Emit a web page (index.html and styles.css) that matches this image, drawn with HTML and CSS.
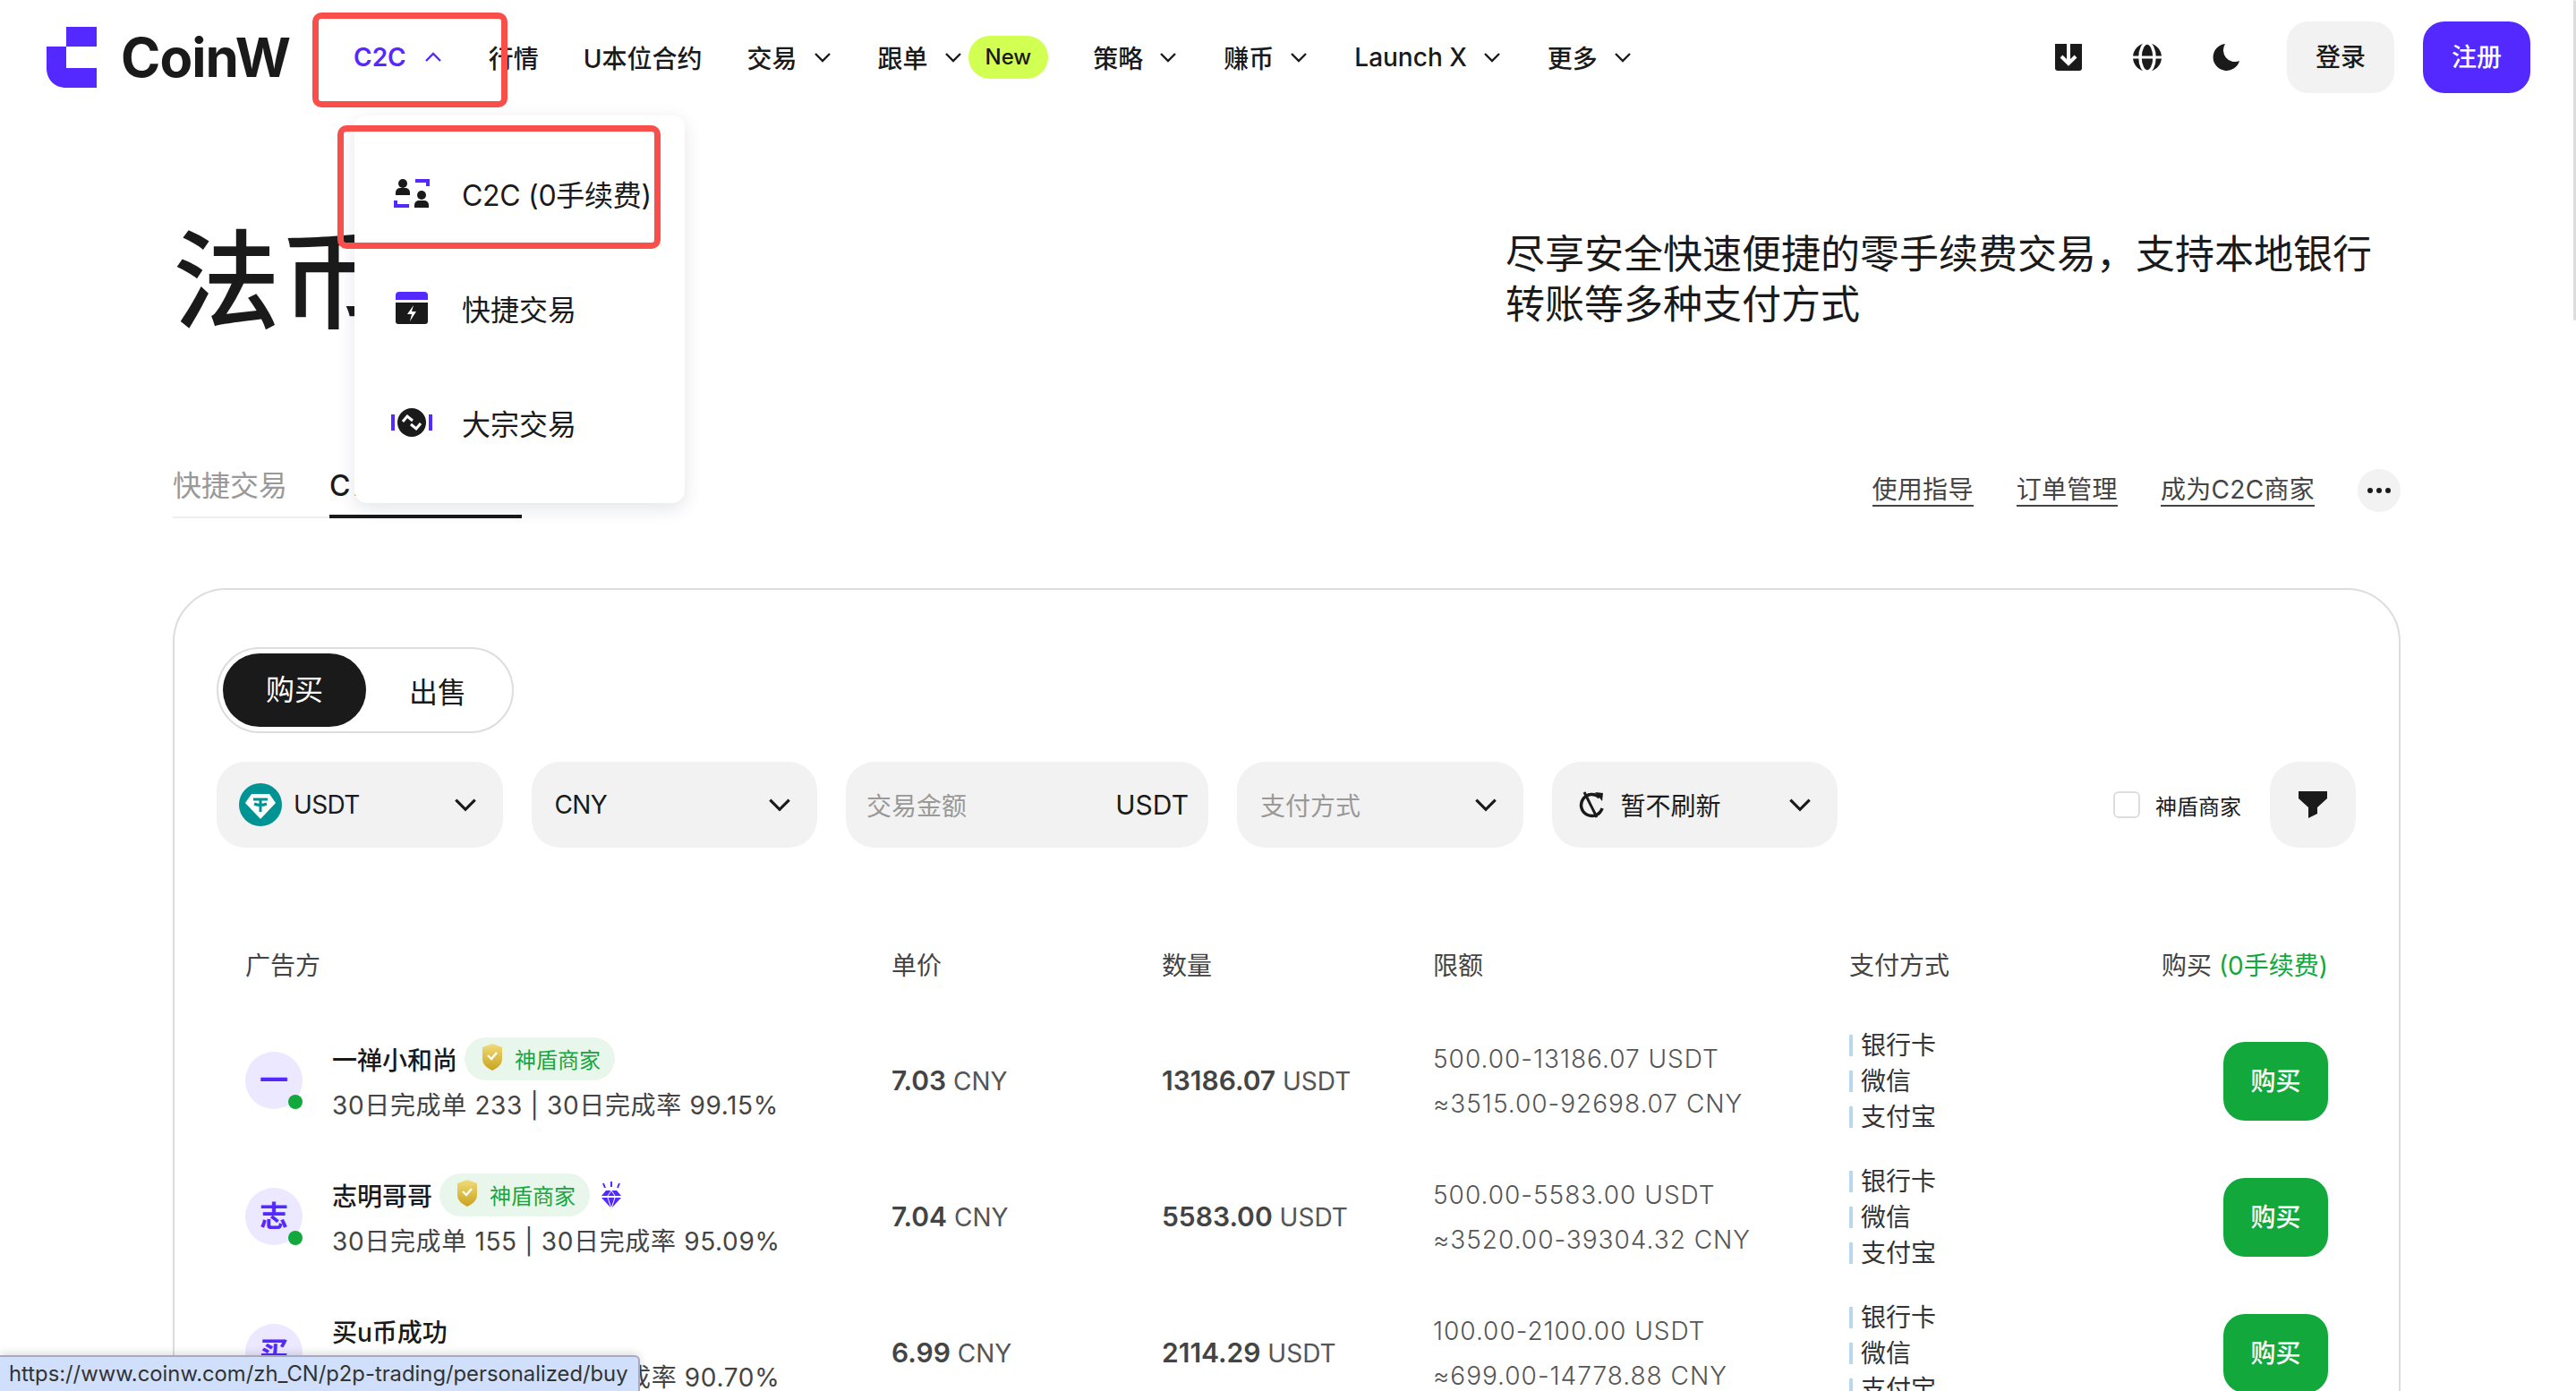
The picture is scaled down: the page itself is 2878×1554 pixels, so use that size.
FILE: index.html
```html
<!DOCTYPE html>
<html lang="zh-CN">
<head>
    <meta charset="UTF-8">
    <title>CoinW C2C</title>
    <link rel="stylesheet" href="styles.css">
</head>
<body>
    <svg class="sprite" aria-hidden="true">
        <defs>
            <linearGradient id="gold" x1="0" y1="0" x2="0" y2="1">
                <stop offset="0" stop-color="#f0dc7a"/>
                <stop offset="1" stop-color="#c9a21c"/>
            </linearGradient>
            <symbol id="chev" viewBox="0 0 24 24"><path d="M4 8l8 8 8-8" fill="none" stroke="currentColor" stroke-width="2.4"/></symbol>
            <symbol id="shield" viewBox="0 0 24 36"><path d="M12 1L23 5v13c0 6-5 10-11 13C6 28 1 24 1 18V5z" fill="url(#gold)"/><path d="M7 14l4 4 6-7" fill="none" stroke="#fff" stroke-width="2.4"/></symbol>
            <symbol id="gem" viewBox="0 0 24 30"><path d="M12 0v6M3 2l2 5M21 2l-2 5" stroke="#5429ff" stroke-width="2"/><path d="M6 10h12l5 6H1zM1 18h22L12 30z" fill="#5429ff"/><path d="M8 18l4 12 4-12M8 16l4-6 4 6" fill="none" stroke="#fff" stroke-width="1"/></symbol>
        </defs>
    </svg>

    <header class="nav">
        <a class="logo">
            <svg width="56" height="68" viewBox="0 0 56 68"><path d="M22 0h34v22H22zM0 22h22v24h34v22H22C9 68 0 59 0 46z" fill="#5429ff"/></svg>
            <span>CoinW</span>
        </a>
        <nav class="nav-links">
            <a class="nav-item active">C2C <svg class="chev flip"><use href="#chev"/></svg></a>
            <a class="nav-item">行情</a>
            <a class="nav-item">U本位合约</a>
            <a class="nav-item">交易 <svg class="chev"><use href="#chev"/></svg></a>
            <a class="nav-item">跟单 <svg class="chev"><use href="#chev"/></svg><span class="new-pill">New</span></a>
            <a class="nav-item">策略 <svg class="chev"><use href="#chev"/></svg></a>
            <a class="nav-item">赚币 <svg class="chev"><use href="#chev"/></svg></a>
            <a class="nav-item">Launch X <svg class="chev"><use href="#chev"/></svg></a>
            <a class="nav-item">更多 <svg class="chev"><use href="#chev"/></svg></a>
        </nav>
        <div class="nav-right">
            <svg class="tool" width="30" height="30" viewBox="0 0 30 30"><path d="M0 0h30v27a3 3 0 0 1-3 3H3a3 3 0 0 1-3-3z" fill="#1a1a1a"/><path d="M15 0v21M7 14l8 8 8-8" fill="none" stroke="#fff" stroke-width="4"/></svg>
            <svg class="tool" width="32" height="32" viewBox="0 0 32 32"><circle cx="16" cy="16" r="16" fill="#1a1a1a"/><ellipse cx="16" cy="16" rx="8" ry="16" fill="none" stroke="#fff" stroke-width="3.500"/><path d="M0 16h32" stroke="#fff" stroke-width="3"/></svg>
            <svg class="tool" width="30" height="30" viewBox="0 0 30 30"><path d="M14 0a15 15 0 1 0 16 19A13 13 0 0 1 14 0z" fill="#1a1a1a"/></svg>
            <a class="btn-login">登录</a>
            <a class="btn-register">注册</a>
        </div>
    </header>

    <!-- dropdown open under C2C -->
    <div class="dropdown">
        <a class="drop-item drop-c2c">
            <svg class="drop-icon" width="46" height="32" viewBox="0 0 46 32"><circle cx="13" cy="5" r="5" fill="#1a1a1a"/><path d="M5 18v-3a5 5 0 0 1 5-5h6a5 5 0 0 1 5 5v3z" fill="#1a1a1a"/><circle cx="34" cy="18" r="5" fill="#1a1a1a"/><path d="M26 32v-3a5 5 0 0 1 5-5h6a5 5 0 0 1 5 5v3z" fill="#1a1a1a"/><path d="M27 2h14v6M5 24v6h15" fill="none" stroke="#5429ff" stroke-width="4"/></svg>
            C2C (0手续费)
        </a>
        <a class="drop-item">
            <svg class="drop-icon" width="46" height="36" viewBox="0 0 46 36"><path d="M5 4a4 4 0 0 1 4-4h28a4 4 0 0 1 4 4v5H5z" fill="#5429ff"/><path d="M5 12h36v21a3 3 0 0 1-3 3H8a3 3 0 0 1-3-3z" fill="#1a1a1a"/><path d="M25 15l-7 10h5l-2 8 7-11h-5z" fill="#fff"/></svg>
            快捷交易
        </a>
        <a class="drop-item">
            <svg class="drop-icon" width="46" height="32" viewBox="0 0 46 32"><circle cx="23" cy="16" r="16" fill="#1a1a1a"/><path d="M13 15l5-6 6 5M33 17l-5 6-6-5" fill="none" stroke="#fff" stroke-width="3"/><path d="M2 7v18M44 7v18" stroke="#5429ff" stroke-width="4"/></svg>
            大宗交易
        </a>
    </div>

    <div class="red-box red-nav"></div>
    <div class="red-box red-drop"></div>

    <main class="page">
        <section class="hero">
            <h1>法币交易</h1>
            <p class="hero-desc">尽享安全快速便捷的零手续费交易，支持本地银行转账等多种支付方式</p>
        </section>

        <div class="tabs-row">
            <div class="tabs">
                <a class="tab">快捷交易</a>
                <a class="tab tab-active">C2C (0手续费)</a>
            </div>
            <div class="tab-links">
                <a>使用指导</a>
                <a>订单管理</a>
                <a>成为C2C商家</a>
                <span class="more-btn"><i></i><i></i><i></i></span>
            </div>
        </div>

        <section class="card">
            <div class="toggle">
                <span class="toggle-on">购买</span>
                <span class="toggle-off">出售</span>
            </div>

            <div class="filters">
                <div class="select w-coin">
                    <svg class="coin" width="48" height="48" viewBox="0 0 48 48"><circle cx="24" cy="24" r="24" fill="#009393"/><path d="M14 12h20l7 10-17 18L7 22z" fill="#fff"/><path d="M16 18h16M24 18v14M17 23c4 1.600 10 1.600 14 0" fill="none" stroke="#009393" stroke-width="3"/></svg>
                    <span class="grow code">USDT</span>
                    <svg class="chev-lg"><use href="#chev"/></svg>
                </div>
                <div class="select w-coin">
                    <span class="grow code">CNY</span>
                    <svg class="chev-lg"><use href="#chev"/></svg>
                </div>
                <div class="select w-amount">
                    <span class="grow placeholder">交易金额</span>
                    <span class="amount-unit">USDT</span>
                </div>
                <div class="select w-coin">
                    <span class="grow placeholder">支付方式</span>
                    <svg class="chev-lg"><use href="#chev"/></svg>
                </div>
                <div class="select w-coin">
                    <svg class="refresh" width="30" height="32" viewBox="0 0 30 32"><path d="M24 8a12 12 0 1 0 3 12" fill="none" stroke="#1a1a1a" stroke-width="3.500"/><path d="M19 2l9 1-1 9z" fill="#1a1a1a"/><path d="M7 2l14 28" stroke="#1a1a1a" stroke-width="3"/></svg>
                    <span class="grow">暂不刷新</span>
                    <svg class="chev-lg"><use href="#chev"/></svg>
                </div>
                <label class="shield-check"><span class="check"></span>神盾商家</label>
                <div class="filter-btn">
                    <svg width="32" height="30" viewBox="0 0 32 30"><path d="M0 0h32v8L21 18v7l-10 5V18L0 8z" fill="#1a1a1a"/></svg>
                </div>
            </div>

            <div class="table-head grid-row">
                <span>广告方</span>
                <span>单价</span>
                <span>数量</span>
                <span>限额</span>
                <span>支付方式</span>
                <span class="right">购买 <b class="zero-fee">(0手续费)</b></span>
            </div>

            <div class="table-row grid-row">
                <div class="ad">
                    <span class="avatar">一<i class="dot"></i></span>
                    <div>
                        <div class="ad-name">一禅小和尚<span class="badge"><svg width="24" height="36"><use href="#shield"/></svg>神盾商家</span></div>
                        <div class="ad-stats">30日完成单 233 | 30日完成率 99.15%</div>
                    </div>
                </div>
                <div class="num"><b>7.03</b> CNY</div>
                <div class="num"><b>13186.07</b> USDT</div>
                <div class="limit"><div>500.00-13186.07 USDT</div><div>≈3515.00-92698.07 CNY</div></div>
                <ul class="pay"><li>银行卡</li><li>微信</li><li>支付宝</li></ul>
                <div class="right"><a class="btn-buy">购买</a></div>
            </div>

            <div class="table-row grid-row">
                <div class="ad">
                    <span class="avatar">志<i class="dot"></i></span>
                    <div>
                        <div class="ad-name">志明哥哥<span class="badge"><svg width="24" height="36"><use href="#shield"/></svg>神盾商家</span><svg class="gem" width="24" height="30"><use href="#gem"/></svg></div>
                        <div class="ad-stats">30日完成单 155 | 30日完成率 95.09%</div>
                    </div>
                </div>
                <div class="num"><b>7.04</b> CNY</div>
                <div class="num"><b>5583.00</b> USDT</div>
                <div class="limit"><div>500.00-5583.00 USDT</div><div>≈3520.00-39304.32 CNY</div></div>
                <ul class="pay"><li>银行卡</li><li>微信</li><li>支付宝</li></ul>
                <div class="right"><a class="btn-buy">购买</a></div>
            </div>

            <div class="table-row grid-row">
                <div class="ad">
                    <span class="avatar">买<i class="dot"></i></span>
                    <div>
                        <div class="ad-name">买u币成功</div>
                        <div class="ad-stats">30日完成单 102 | 30日完成率 90.70%</div>
                    </div>
                </div>
                <div class="num"><b>6.99</b> CNY</div>
                <div class="num"><b>2114.29</b> USDT</div>
                <div class="limit"><div>100.00-2100.00 USDT</div><div>≈699.00-14778.88 CNY</div></div>
                <ul class="pay"><li>银行卡</li><li>微信</li><li>支付宝</li></ul>
                <div class="right"><a class="btn-buy">购买</a></div>
            </div>
        </section>
    </main>

    <div class="status-bar">https://www.coinw.com/zh_CN/p2p-trading/personalized/buy</div>
    <div class="scroll-thumb"></div>
</body>
</html>
```

FILE: styles.css
```css
html, body {
    margin: 0;
    height: 100%;
    overflow: hidden;
}
body {
    position: relative;
    background: #fff;
    color: #1a1a1a;
    font-family: Inter, "Noto Sans CJK SC", sans-serif;
    font-size: 28px;
}
.sprite {
    display: block;
    width: 0;
    height: 0;
}
a {
    color: inherit;
    text-decoration: none;
}

/* Header */
.nav {
    display: flex;
    align-items: center;
    height: 128px;
    padding: 0 51px 0 52px;
    box-sizing: border-box;
}
.logo {
    display: flex;
    align-items: center;
    gap: 27px;
    font-size: 60px;
    font-weight: 700;
    letter-spacing: -1px;
}
.nav-links {
    display: flex;
    align-items: center;
    gap: 50px;
    margin-left: 71px;
    font-weight: 500;
    white-space: nowrap;
}
.nav-item {
    display: flex;
    align-items: center;
}
.nav-item.active {
    color: #5429ff;
    font-weight: 600;
}
.chev {
    width: 24px;
    height: 24px;
    margin-left: 16px;
}
.chev.flip {
    margin-left: 18px;
    transform: rotate(180deg);
}
.new-pill {
    margin-left: 5px;
    padding: 0 19px;
    height: 48px;
    line-height: 48px;
    border-radius: 24px;
    background: #d1ff52;
    font-size: 24px;
}
.nav-right {
    display: flex;
    align-items: center;
    margin-left: auto;
}
.tool {
    margin-right: 57px;
}
.btn-login, .btn-register {
    width: 120px;
    height: 80px;
    line-height: 80px;
    border-radius: 24px;
    text-align: center;
    font-weight: 500;
}
.btn-login {
    background: #f2f2f2;
    margin-left: -4px;
}
.btn-register {
    background: #5429ff;
    color: #fff;
    margin-left: 32px;
}

/* Dropdown */
.dropdown {
    position: absolute;
    left: 396px;
    top: 129px;
    z-index: 5;
    width: 369px;
    height: 433px;
    padding-top: 23px;
    box-sizing: border-box;
    background: #fff;
    border-radius: 14px;
    box-shadow: 0 6px 20px rgba(30, 40, 80, 0.12);
}
.drop-item {
    display: flex;
    align-items: center;
    height: 128px;
    padding-left: 41px;
    font-size: 32px;
    white-space: nowrap;
}
.drop-c2c {
    letter-spacing: -0.3px;
}
.drop-icon {
    margin-right: 33px;
}
.red-box {
    position: absolute;
    z-index: 6;
    box-sizing: border-box;
    border: 7px solid #f94f4b;
    border-radius: 10px;
}
.red-nav {
    left: 349px;
    top: 14px;
    width: 218px;
    height: 106px;
}
.red-drop {
    left: 377px;
    top: 140px;
    width: 361px;
    height: 138px;
}

/* Hero */
.page {
    padding: 0 196px 0 193px;
}
.hero {
    display: flex;
    justify-content: space-between;
    align-items: center;
    height: 160px;
    padding-top: 104px;
}
.hero h1 {
    margin: 0;
    padding-top: 6px;
    font-size: 120px;
    font-weight: 500;
    line-height: 160px;
}
.hero-desc {
    width: 980px;
    margin: 0 20px 0 0;
    font-size: 44px;
    line-height: 56px;
}

/* Tabs */
.tabs-row {
    display: flex;
    justify-content: space-between;
    align-items: flex-end;
    margin-top: 113px;
    height: 74px;
}
.tabs {
    display: flex;
    border-bottom: 2px solid #eee;
    font-size: 32px;
}
.tab {
    padding: 0 47px 2px 0;
    color: #999;
    line-height: 60px;
}
.tab-active {
    padding-right: 0;
    width: 215px;
    white-space: nowrap;
    color: #1a1a1a;
    font-weight: 500;
    letter-spacing: 3px;
    border-bottom: 4px solid #1a1a1a;
    margin-bottom: -2px;
}
.tab-links {
    display: flex;
    align-items: center;
    gap: 48px;
    color: #444;
    padding-bottom: 7px;
    letter-spacing: 0.3px;
}
.tab-links a {
    border-bottom: 2px solid #444;
    line-height: 34px;
}
.more-btn {
    display: flex;
    align-items: center;
    justify-content: center;
    gap: 4px;
    width: 48px;
    height: 48px;
    border-radius: 50%;
    background: #f2f2f2;
}
.more-btn i {
    width: 6px;
    height: 6px;
    border-radius: 50%;
    background: #1a1a1a;
}

/* Card */
.card {
    margin-top: 78px;
    padding: 64px 48px 0 47px;
    height: 1000px;
    border: 2px solid #ddd;
    border-radius: 60px;
}
.toggle {
    display: inline-flex;
    align-items: center;
    box-sizing: border-box;
    width: 332px;
    height: 96px;
    padding: 0 5px;
    border: 2px solid #ddd;
    border-radius: 48px;
    font-size: 32px;
    vertical-align: top;
}
.toggle-on {
    width: 160px;
    height: 82px;
    line-height: 82px;
    text-align: center;
    border-radius: 41px;
    background: #1a1a1a;
    color: #fff;
}
.toggle-off {
    margin-left: 48px;
}
.filters {
    display: flex;
    align-items: center;
    gap: 32px;
    margin-top: 32px;
}
.select {
    display: flex;
    align-items: center;
    box-sizing: border-box;
    height: 96px;
    padding: 0 26px 0 26px;
    border-radius: 32px;
    background: #f2f2f2;
}
.w-coin {
    width: 319.5px;
}
.w-amount {
    width: 405px;
    padding: 0 22px 0 23px;
}
.grow {
    flex: 1;
}
.code {
    letter-spacing: -0.6px;
}
.amount-unit {
    font-size: 30px;
}
.placeholder {
    color: #999;
}
.chev-lg {
    width: 32px;
    height: 32px;
}
.coin {
    margin-right: 13px;
    margin-left: -1px;
}
.refresh {
    margin-right: 18px;
    margin-left: 3px;
}
.shield-check {
    display: flex;
    align-items: center;
    gap: 17px;
    margin-left: auto;
    font-size: 24px;
}
.check {
    width: 30px;
    height: 30px;
    box-sizing: border-box;
    border: 2px solid #ddd;
    border-radius: 6px;
}
.filter-btn {
    display: flex;
    align-items: center;
    justify-content: center;
    width: 96px;
    height: 96px;
    border-radius: 32px;
    background: #f2f2f2;
}

/* Table */
.grid-row {
    display: grid;
    grid-template-columns: 722px 302px 303px 465px 260px 1fr;
    align-items: center;
    padding: 0 31px 0 32px;
}
.table-head {
    height: 80px;
    margin: 90px 0 15px;
    color: #444;
}
.right {
    text-align: right;
}
.zero-fee {
    color: #12a83c;
    font-weight: 400;
}
.table-row {
    height: 152px;
}
.ad {
    display: flex;
    align-items: center;
    gap: 33px;
    padding-bottom: 3px;
    white-space: nowrap;
}
.avatar {
    position: relative;
    flex: none;
    width: 64px;
    height: 64px;
    line-height: 64px;
    text-align: center;
    border-radius: 50%;
    background: #ece8ff;
    color: #5429ff;
    font-weight: 700;
    font-size: 32px;
}
.dot {
    position: absolute;
    right: 0;
    bottom: 0;
    width: 16px;
    height: 16px;
    border-radius: 50%;
    background: #12a83c;
}
.ad-name {
    display: flex;
    align-items: center;
    height: 48px;
    font-weight: 500;
}
.badge {
    display: flex;
    align-items: center;
    gap: 13px;
    height: 48px;
    margin-left: 8px;
    padding: 0 16px 0 19px;
    border-radius: 24px;
    background: #e9f6ec;
    color: #12a83c;
    font-size: 24px;
    font-weight: 400;
}
.gem {
    margin-left: 12px;
}
.ad-stats {
    margin-top: 8px;
    line-height: 40px;
    font-size: 28px;
    letter-spacing: 0.65px;
    color: #444;
}
.num {
    padding-bottom: 2px;
    color: #555;
    white-space: nowrap;
}
.num b {
    font-size: 30px;
    font-weight: 600;
    color: #444;
}
.limit {
    color: #555;
    line-height: 50px;
    letter-spacing: 1px;
    font-weight: 300;
    white-space: nowrap;
}
.pay {
    margin: 0;
    padding: 0;
    list-style: none;
    color: #333;
}
.pay li {
    height: 40px;
    line-height: 40px;
    padding-left: 13px;
    background: linear-gradient(#b8d8f0, #b8d8f0) left center / 4px 24px no-repeat;
}
.btn-buy {
    display: inline-block;
    width: 117px;
    height: 88px;
    line-height: 88px;
    text-align: center;
    border-radius: 24px;
    background: #12a83c;
    color: #fff;
    font-weight: 500;
    vertical-align: middle;
}

/* Browser overlays */
.status-bar {
    position: absolute;
    left: 0;
    bottom: 0;
    z-index: 7;
    box-sizing: border-box;
    width: 715px;
    height: 40px;
    line-height: 38px;
    padding-left: 10px;
    background: #d0e0fc;
    border: 2px solid #aab;
    border-width: 2px 2px 0 0;
    border-top-right-radius: 6px;
    box-shadow: 0 -2px 10px rgba(0, 0, 0, 0.15);
    font-size: 23.8px;
    color: #333;
    white-space: nowrap;
}
.scroll-thumb {
    position: absolute;
    right: 0;
    top: 0;
    width: 3px;
    height: 358px;
    background: #ddd;
    border-radius: 2px;
}
```
